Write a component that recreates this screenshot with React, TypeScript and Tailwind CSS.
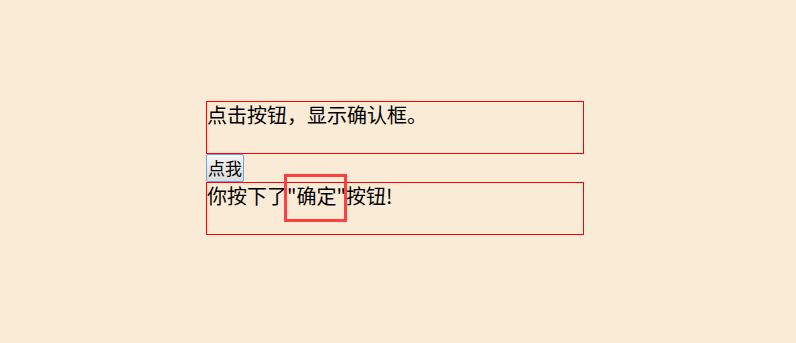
import React from "react";

export default function App() {
  return (
    <div
      className="relative w-[796px] h-[343px] bg-[#faebd7] overflow-hidden text-black"
      style={{ fontFamily: '"Microsoft YaHei", "Noto Sans CJK SC", sans-serif' }}
    >
      <div className="pt-[101px] pl-[206px] flex flex-col items-start">
        <div className="box-border w-[378px] h-[53px] border border-[#ff0000] text-[20px] leading-[26px]">
          点击按钮，显示确认框。
        </div>
        <button className="box-border w-[38px] h-[28px] p-0 flex items-center justify-center border border-[#7a9fe0] rounded-[2px] bg-gradient-to-b from-[#f5f5f5] to-[#dcdcdc] text-[17px] leading-[20px] text-black">
          点我
        </button>
        <div className="box-border w-[378px] h-[53px] border border-[#ff0000] text-[20px] leading-[26px]">
          你按下了"确定"按钮!
        </div>
      </div>
      <div className="absolute left-[284px] top-[174px] w-[63px] h-[48px] border-[3px] border-[#ff4040]" />
    </div>
  );
}
